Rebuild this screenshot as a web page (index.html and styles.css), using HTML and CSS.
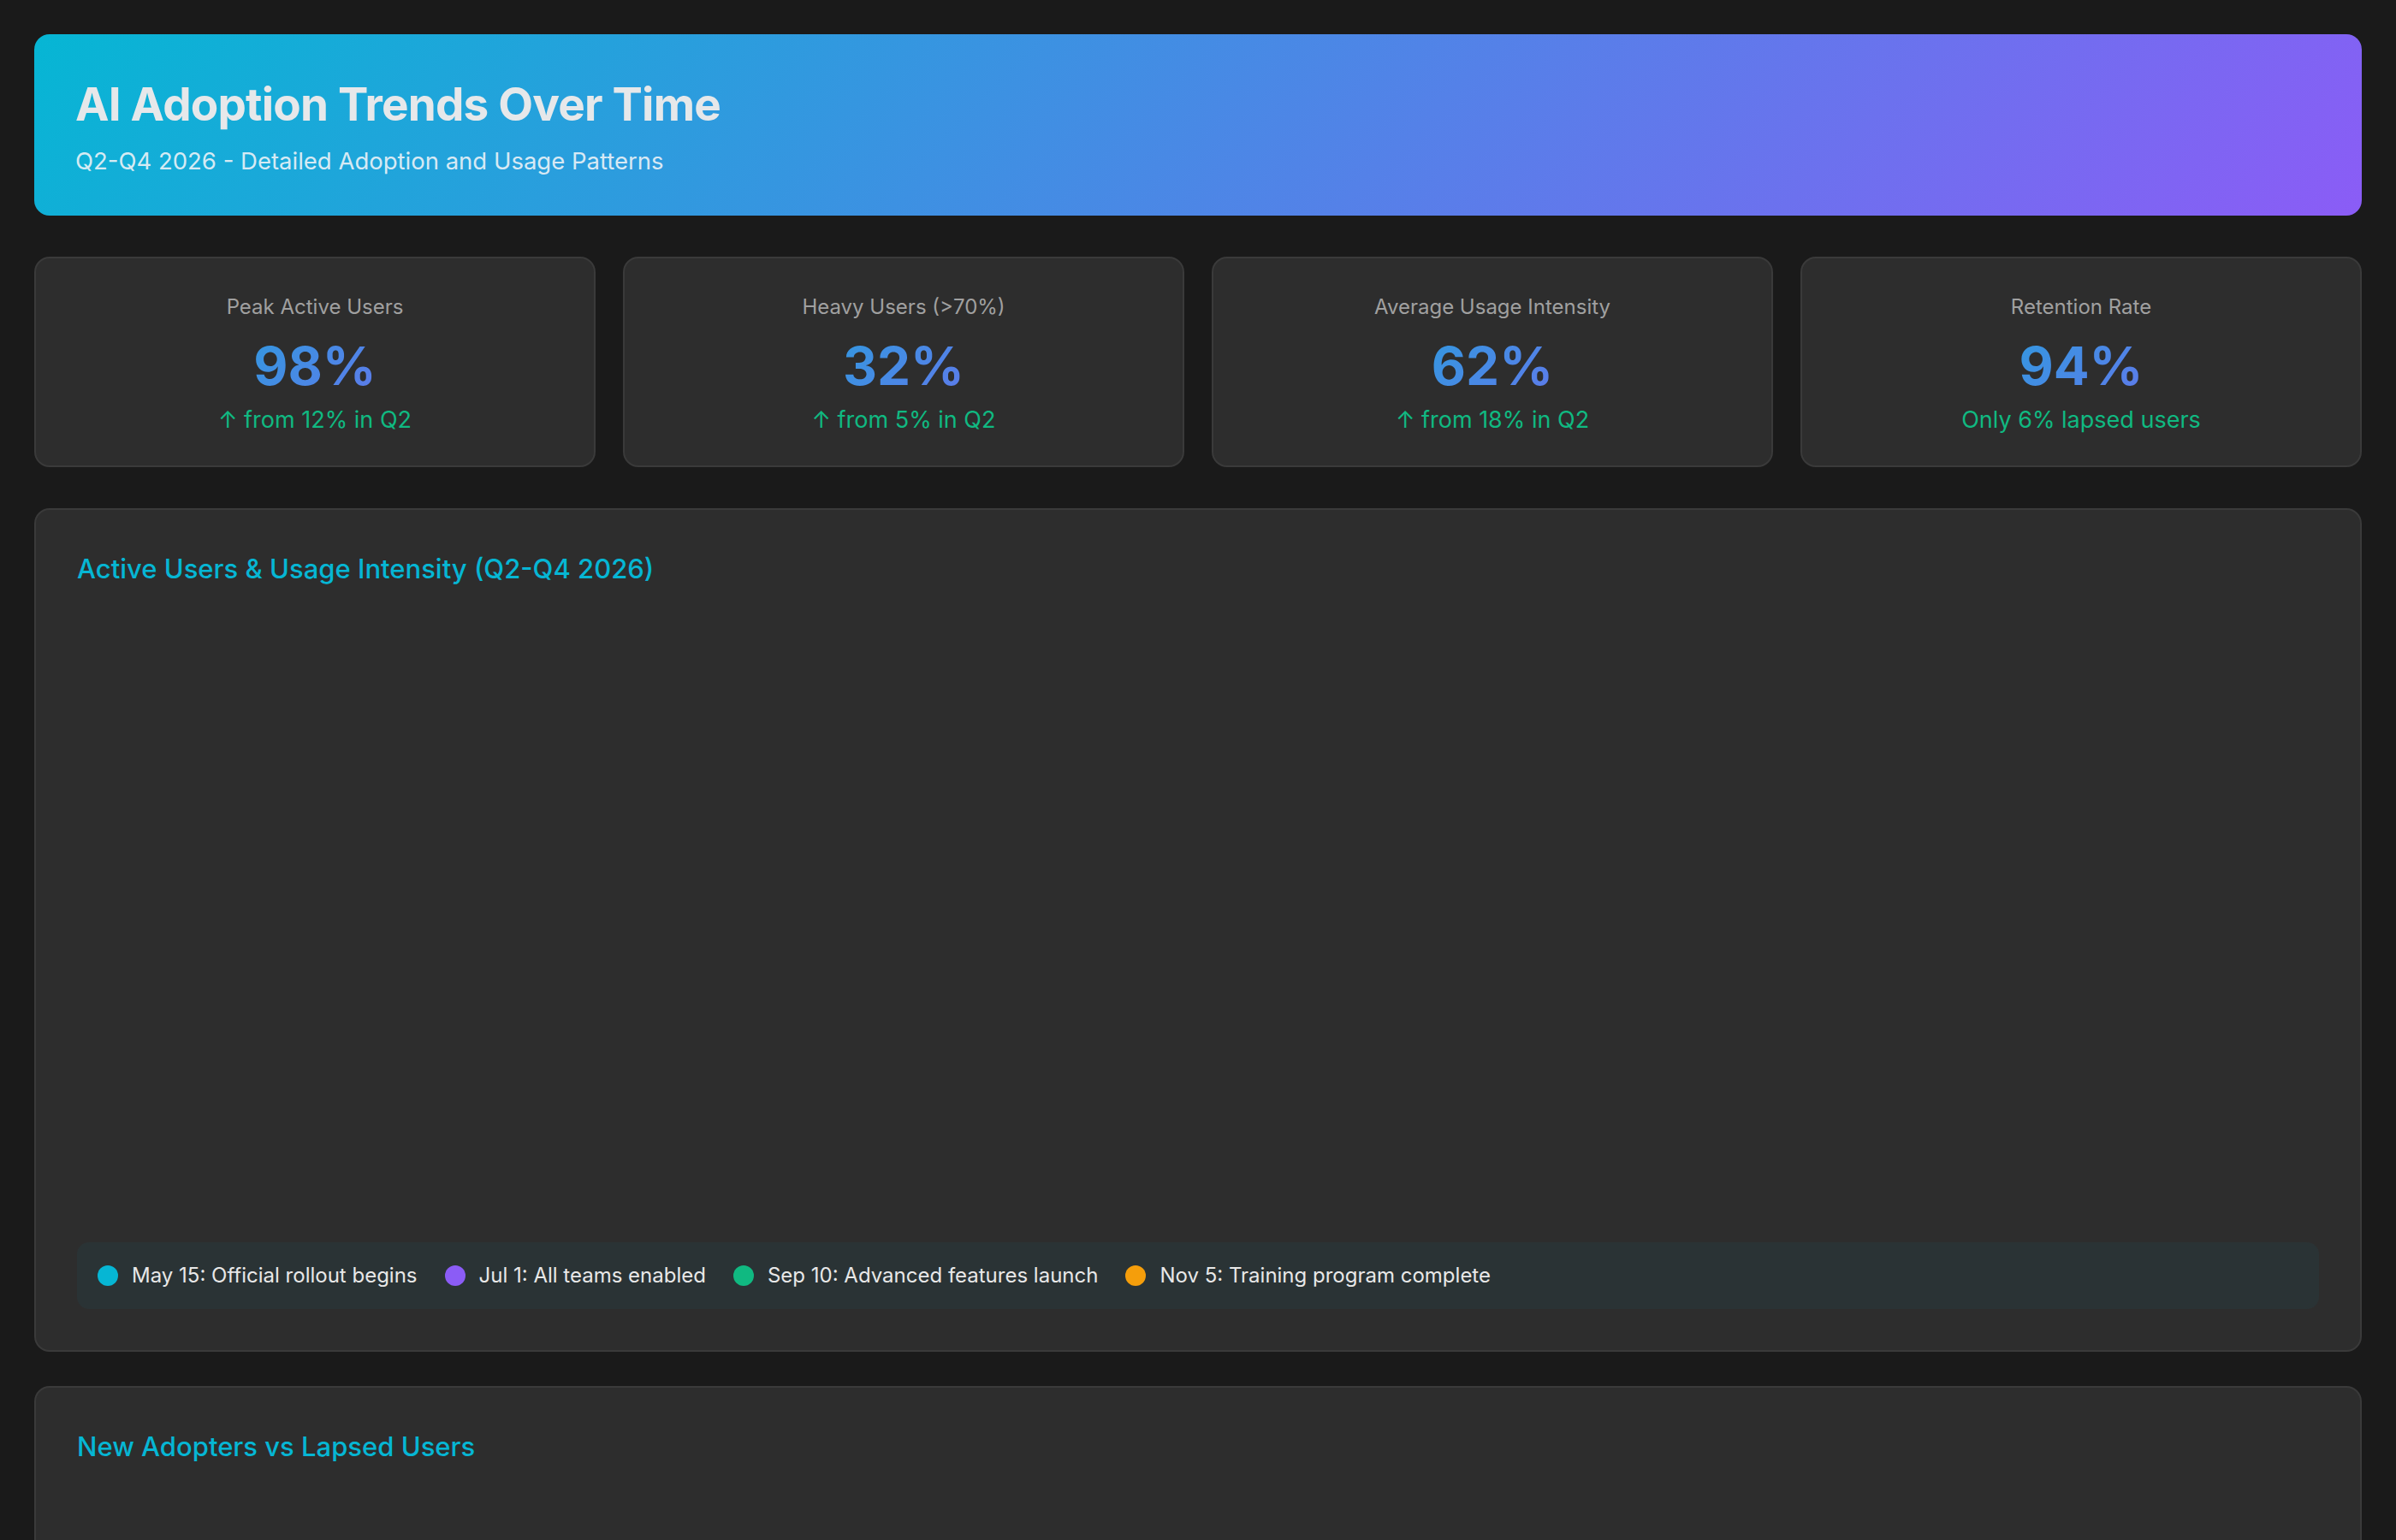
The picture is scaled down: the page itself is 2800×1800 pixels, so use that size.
FILE: index.html
```html
<!DOCTYPE html>
<html lang="en">
<head>
    <meta charset="UTF-8">
    <meta name="viewport" content="width=device-width, initial-scale=1.0">
    <title>AI Adoption Trends Over Time</title>
    <link rel="stylesheet" href="styles.css">
</head>
<body>
    <div class="container">
        <div class="header">
            <h1>AI Adoption Trends Over Time</h1>
            <p>Q2-Q4 2026 - Detailed Adoption and Usage Patterns</p>
        </div>

        <div class="stats-grid">
            <div class="stat-card">
                <div class="stat-label">Peak Active Users</div>
                <div class="stat-value">98%</div>
                <div class="stat-change">↑ from 12% in Q2</div>
            </div>
            <div class="stat-card">
                <div class="stat-label">Heavy Users (&gt;70%)</div>
                <div class="stat-value">32%</div>
                <div class="stat-change">↑ from 5% in Q2</div>
            </div>
            <div class="stat-card">
                <div class="stat-label">Average Usage Intensity</div>
                <div class="stat-value">62%</div>
                <div class="stat-change">↑ from 18% in Q2</div>
            </div>
            <div class="stat-card">
                <div class="stat-label">Retention Rate</div>
                <div class="stat-value">94%</div>
                <div class="stat-change">Only 6% lapsed users</div>
            </div>
        </div>

        <div class="chart-container">
            <h2 class="chart-title">Active Users &amp; Usage Intensity (Q2-Q4 2026)</h2>
            <div class="chart-area" id="mainChart"></div>
            <div class="milestones">
                <div class="milestone"><span class="dot dot-cyan"></span>May 15: Official rollout begins</div>
                <div class="milestone"><span class="dot dot-purple"></span>Jul 1: All teams enabled</div>
                <div class="milestone"><span class="dot dot-green"></span>Sep 10: Advanced features launch</div>
                <div class="milestone"><span class="dot dot-orange"></span>Nov 5: Training program complete</div>
            </div>
        </div>

        <div class="chart-container">
            <h2 class="chart-title">New Adopters vs Lapsed Users</h2>
            <div class="chart-area" id="flowChart"></div>
        </div>
    </div>
</body>
</html>
```

FILE: styles.css
```css
* {
    box-sizing: border-box;
}
body {
    font-family: 'Inter', 'Noto Sans', sans-serif;
    background-color: #1a1a1a;
    color: #e0e0e0;
    margin: 0;
    padding: 40px;
}
.header {
    background: linear-gradient(135deg, #06b6d4, #8b5cf6);
    border-radius: 18px;
    padding: 50px 48px;
    height: 212px;
    margin-bottom: 48px;
}
.header h1 {
    margin: 0;
    font-size: 53px;
    font-weight: 700;
    letter-spacing: -0.8px;
    line-height: 64px;
    color: #e6e8ea;
}
.header p {
    margin: 16px 0 0 0;
    font-size: 27.5px;
    line-height: 36px;
    color: rgba(240, 244, 248, 0.9);
}
.stats-grid {
    display: grid;
    grid-template-columns: repeat(4, 1fr);
    gap: 32px;
    margin-bottom: 48px;
}
.stat-card {
    background: #2d2d2d;
    border: 2px solid #3a3a3a;
    border-radius: 18px;
    height: 246px;
    padding: 40px 24px;
    text-align: center;
}
.stat-label {
    font-size: 24px;
    line-height: 34px;
    color: #a0a0a0;
}
.stat-value {
    font-size: 62px;
    font-weight: 700;
    line-height: 76px;
    margin: 14px 0 0 0;
    background: linear-gradient(135deg, #06b6d4, #8b5cf6);
    -webkit-background-clip: text;
    background-clip: text;
    color: transparent;
}
.stat-change {
    font-size: 27px;
    line-height: 36px;
    margin-top: 7px;
    color: #10b981;
}
.chart-container {
    background: #2d2d2d;
    border: 2px solid #3a3a3a;
    border-radius: 18px;
    padding: 49px 48px 48px 48px;
    margin-bottom: 40px;
}
.chart-title {
    margin: 0 0 32px 0;
    font-size: 31px;
    font-weight: 500;
    line-height: 40px;
    color: #06b6d4;
}
.chart-area {
    height: 703px;
}
.milestones {
    display: flex;
    flex-wrap: wrap;
    gap: 32px;
    margin-top: 32px;
    padding: 24px;
    background: rgba(6, 182, 212, 0.05);
    border-radius: 14px;
}
.milestone {
    display: flex;
    align-items: center;
    gap: 16px;
    font-size: 24px;
    line-height: 30px;
    color: #e8e8e8;
}
.dot {
    width: 24px;
    height: 24px;
    border-radius: 50%;
}
.dot-cyan { background: #06b6d4; }
.dot-purple { background: #8b5cf6; }
.dot-green { background: #10b981; }
.dot-orange { background: #f59e0b; }
```
